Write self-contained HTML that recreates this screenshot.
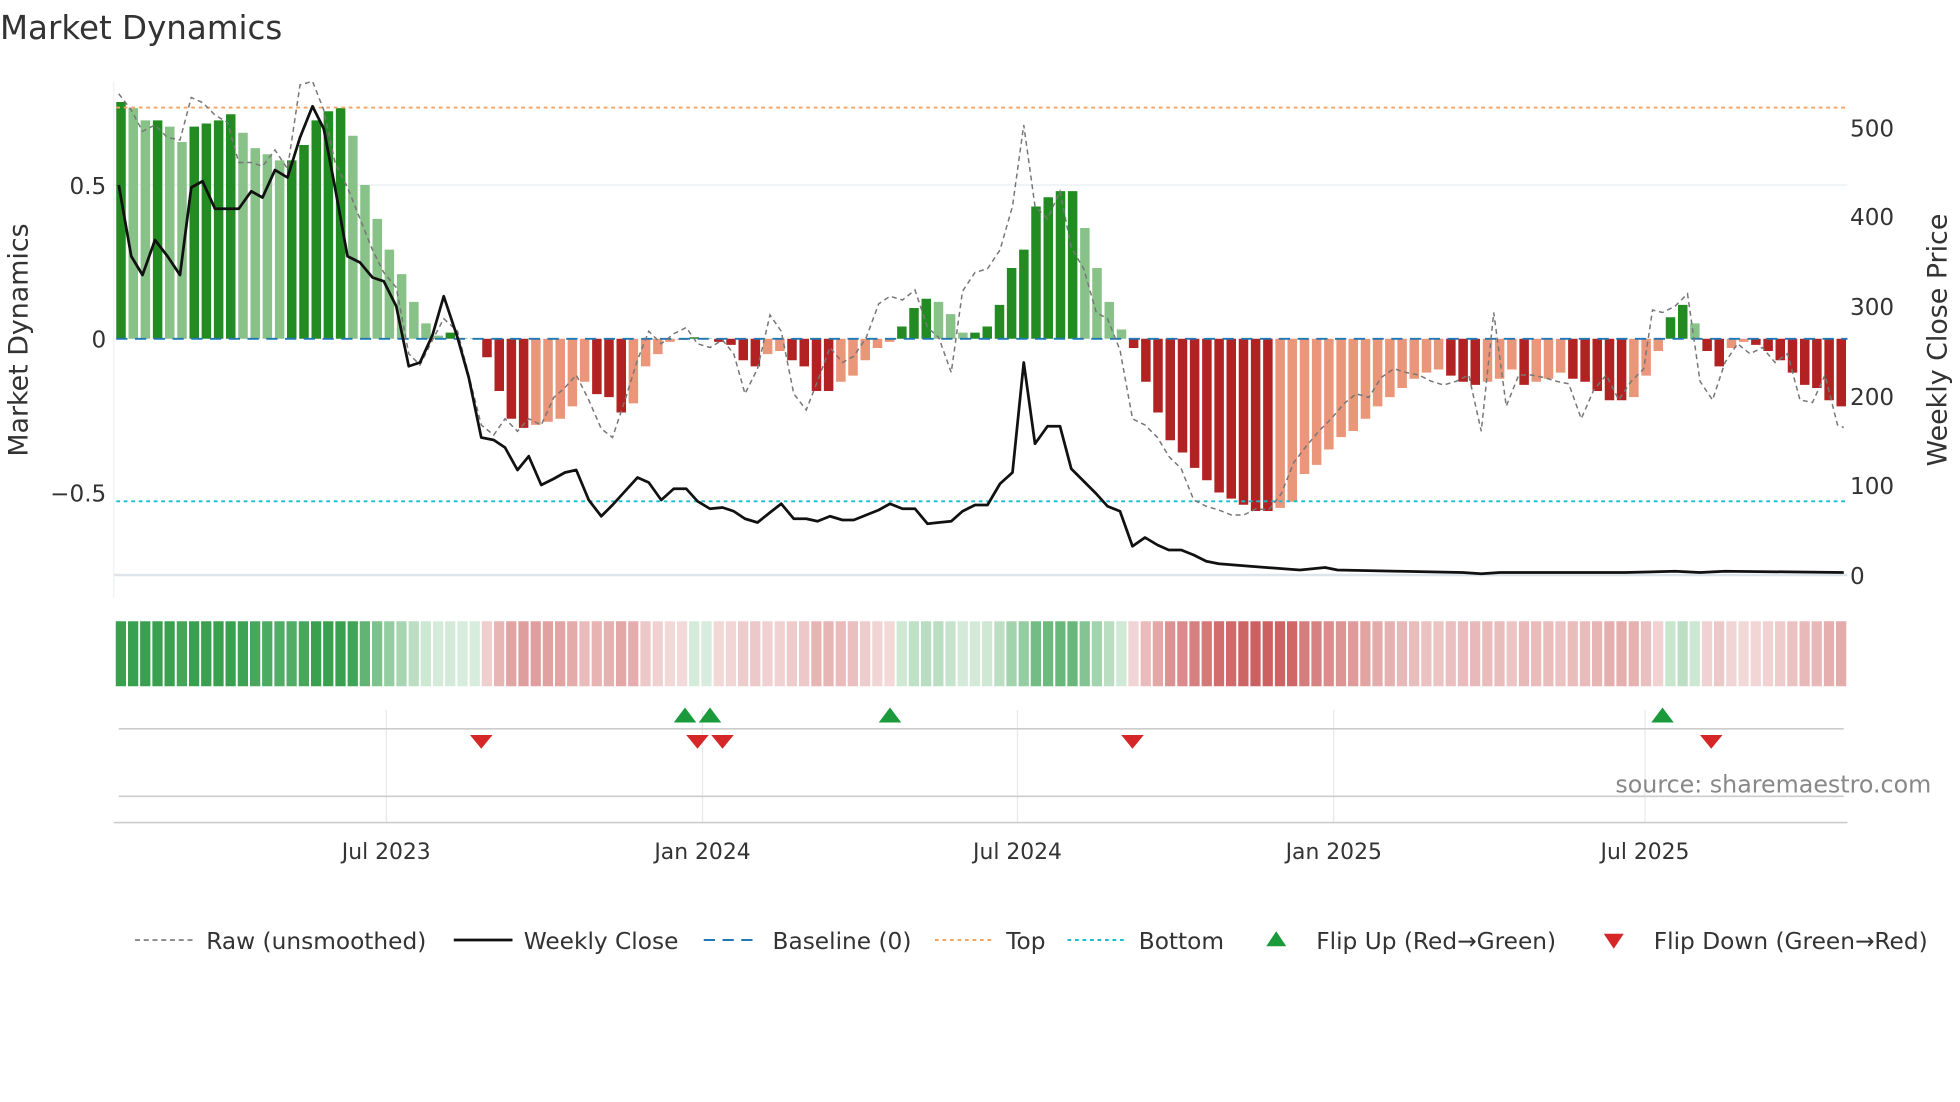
<!DOCTYPE html>
<html><head><meta charset="utf-8"><style>
html,body{margin:0;padding:0;background:#fff;}
svg{display:block;font-family:"DejaVu Sans","Liberation Sans",sans-serif;}
</style></head><body>
<svg id="s" width="1960" height="1102" viewBox="0 0 1568 881.6" xmlns="http://www.w3.org/2000/svg">
<rect width="1568" height="882" fill="#fff"/>
<text x="0" y="31" font-size="26" fill="#333">Market Dynamics</text>
<line x1="91" y1="148" x2="1478" y2="148" stroke="#e8eef2"/>
<line x1="91" y1="460" x2="1478" y2="460" stroke="#dde4ea" stroke-width="2"/>
<line x1="91" y1="65" x2="91" y2="478" stroke="#eef2f5"/>
<g id="bars"></g>
<line x1="93" y1="271" x2="1478" y2="271" stroke="#1f77b4" stroke-width="1.5" stroke-dasharray="9,6"/>
<line x1="93" y1="86" x2="1478" y2="86" stroke="#f4a460" stroke-width="1.5" stroke-dasharray="3,3"/>
<line x1="93" y1="401" x2="1478" y2="401" stroke="#17becf" stroke-width="1.5" stroke-dasharray="3,3"/>
<polyline id="raw" fill="none" stroke="#777" stroke-width="1.2" stroke-dasharray="4,3"/>
<polyline id="cls" fill="none" stroke="#111" stroke-width="2.2" stroke-linejoin="round"/>
<g font-size="18.5" fill="#333">
<text x="85" y="155" text-anchor="end">0.5</text>
<text x="85" y="278" text-anchor="end">0</text>
<text x="85" y="401" text-anchor="end">−0.5</text>
<text x="1480" y="109">500</text>
<text x="1480" y="180">400</text>
<text x="1480" y="252">300</text>
<text x="1480" y="324">200</text>
<text x="1480" y="395">100</text>
<text x="1480" y="467">0</text>
<text transform="translate(22,272) rotate(-90)" text-anchor="middle" font-size="21.5">Market Dynamics</text>
<text transform="translate(1557,272) rotate(-90)" text-anchor="middle" font-size="21.5">Weekly Close Price</text>
</g>
<g id="heat"></g>
<g stroke="#e6e9ec">
<line x1="309" y1="568" x2="309" y2="658"/><line x1="562" y1="568" x2="562" y2="658"/><line x1="814" y1="568" x2="814" y2="658"/><line x1="1067" y1="568" x2="1067" y2="658"/><line x1="1316" y1="568" x2="1316" y2="658"/>
</g>
<line x1="95" y1="583" x2="1475" y2="583" stroke="#ccc" stroke-width="1.3"/>
<line x1="95" y1="637" x2="1475" y2="637" stroke="#ccc" stroke-width="1.3"/>
<line x1="91" y1="658" x2="1478" y2="658" stroke="#ccc" stroke-width="1.3"/>
<g id="mk"></g>
<text x="1545" y="634" font-size="19" fill="#888" text-anchor="end">source: sharemaestro.com</text>
<g font-size="17.5" fill="#333" text-anchor="middle">
<text x="309" y="687">Jul 2023</text><text x="562" y="687">Jan 2024</text><text x="814" y="687">Jul 2024</text><text x="1067" y="687">Jan 2025</text><text x="1316" y="687">Jul 2025</text>
</g>
<g font-size="18.6" fill="#333">
<line x1="108" y1="752" x2="154" y2="752" stroke="#777" stroke-width="1.3" stroke-dasharray="4,3"/><text x="165" y="759">Raw (unsmoothed)</text>
<line x1="363" y1="752" x2="410" y2="752" stroke="#111" stroke-width="2.2"/><text x="419" y="759">Weekly Close</text>
<line x1="563" y1="752" x2="608" y2="752" stroke="#1f77b4" stroke-width="1.6" stroke-dasharray="9,6"/><text x="618" y="759">Baseline (0)</text>
<line x1="748" y1="752" x2="794" y2="752" stroke="#f4a460" stroke-width="1.6" stroke-dasharray="3,3"/><text x="805" y="759">Top</text>
<line x1="854" y1="752" x2="900" y2="752" stroke="#17becf" stroke-width="1.6" stroke-dasharray="3,3"/><text x="911" y="759">Bottom</text>
<polygon points="1013,757 1021,745 1029,757" fill="#1a9a3a"/><text x="1053" y="759">Flip Up (Red→Green)</text>
<polygon points="1283,747 1299,747 1291,759" fill="#d62728"/><text x="1323" y="759">Flip Down (Green→Red)</text>
</g>
</svg>
<script>
var v=[0.77,0.75,0.71,0.71,0.69,0.64,0.69,0.70,0.71,0.73,0.67,0.62,0.60,0.58,0.58,0.63,0.71,0.74,0.75,0.66,0.50,0.39,0.29,0.21,0.12,0.05,0.01,0.02,0.003,0.002,
-0.06,-0.17,-0.26,-0.29,-0.28,-0.27,-0.26,-0.22,-0.14,-0.18,-0.19,-0.24,-0.21,-0.09,-0.05,-0.01,-0.004,0.005,0.003,-0.01,
-0.02,-0.07,-0.09,-0.05,-0.04,-0.07,-0.09,-0.17,-0.17,-0.14,-0.12,-0.07,-0.03,-0.01,
0.04,0.1,0.13,0.12,0.08,0.02,0.02,0.04,0.11,0.23,0.29,0.43,0.46,0.48,0.48,0.36,0.23,0.12,0.03,
-0.03,-0.14,-0.24,-0.33,-0.37,-0.42,-0.46,-0.5,-0.52,-0.54,-0.56,-0.56,-0.55,-0.53,-0.44,-0.41,-0.36,-0.32,-0.3,-0.26,-0.22,-0.19,-0.16,-0.13,-0.11,-0.1,-0.12,-0.14,-0.15,-0.14,-0.13,-0.1,-0.15,-0.14,-0.13,-0.11,-0.13,-0.14,-0.17,-0.2,-0.2,-0.19,-0.12,-0.04,
0.07,0.11,0.05,
-0.04,-0.09,-0.03,-0.01,-0.02,-0.04,-0.07,-0.11,-0.15,-0.16,-0.2,-0.22];
var n=v.length,x0=92,w=(1478-92)/n,h='',hm='';
for(var i=0;i<n;i++){var x=x0+i*w,val=v[i],p=i?v[i-1]:0,c;
 if(val>=0)c=(val>=p)?'#228b22':'#88c288';else c=(val<=p)?'#b22222':'#e9967a';
 var y=271-val*246,hh=Math.abs(val*246);
 h+='<rect x="'+(x+1).toFixed(1)+'" y="'+Math.min(y,271).toFixed(1)+'" width="'+(w-2.2).toFixed(1)+'" height="'+hh.toFixed(1)+'" fill="'+c+'"/>';
 var a=Math.min(0.9,0.18+Math.abs(val)*1.05);
 hm+='<rect x="'+(x+0.6).toFixed(1)+'" y="497" width="'+(w-1.6).toFixed(1)+'" height="52" fill="'+(val>=0?'rgba(34,150,60,':'rgba(190,50,50,')+a.toFixed(2)+')"/>';}
document.getElementById('bars').innerHTML=h;document.getElementById('heat').innerHTML=hm;
var cl=[95,148,105,205,114,220,124,192,134,205,144,220,153,150,162,145,172,167,191,167,201,153,210,158,220,136,230,142,240,110,250,85,259,103,268,150,278,205,288,210,298,222,307,225,317,245,327,293,336,290,346,268,355,237,366,270,375,302,385,350,395,352,404,358,414,376,423,365,433,388,443,383,452,378,461,376,471,400,481,413,490,404,500,393,510,382,519,386,529,400,539,391,549,391,558,401,568,407,578,406,587,409,596,415,606,418,616,410,625,403,635,415,645,415,654,417,664,413,674,416,683,416,693,412,703,408,712,403,722,407,732,407,742,419,751,418,761,417,770,409,780,404,790,404,800,387,810,378,819,290,828,355,838,341,848,341,857,375,867,385,877,395,886,405,896,409,906,437,916,430,926,436,935,440,945,440,955,444,965,449,975,451,1000,453,1040,456,1060,454,1070,456,1120,457,1170,458,1185,459,1200,458,1300,458,1340,457,1360,458,1380,457,1475,458];
var rw=[95,75,105,88,114,105,124,100,134,110,144,112,153,78,162,82,172,92,182,98,191,130,201,130,210,133,220,120,230,135,240,68,250,65,259,88,268,130,278,150,288,175,298,200,307,218,317,230,327,283,336,292,346,272,355,255,366,265,375,300,385,340,395,348,404,335,414,345,423,335,433,340,443,318,452,310,461,300,471,320,481,343,490,350,500,320,510,288,519,265,529,275,539,267,549,262,558,275,568,278,578,272,587,283,596,315,606,295,616,252,625,265,635,315,645,328,654,305,664,278,674,290,683,285,693,270,703,243,712,237,722,240,732,232,742,262,751,270,761,298,770,233,780,218,790,215,800,200,810,165,819,100,828,165,838,175,848,153,857,198,867,215,877,250,886,255,896,280,906,335,916,340,926,350,935,365,945,375,955,400,965,405,975,408,985,412,995,412,1005,407,1015,408,1025,395,1035,370,1045,357,1055,345,1065,335,1075,323,1085,315,1095,318,1105,302,1115,295,1125,298,1135,300,1145,305,1155,308,1165,305,1175,300,1185,345,1195,250,1205,325,1215,300,1225,300,1235,302,1245,305,1255,307,1265,335,1275,312,1285,300,1295,320,1305,305,1315,295,1322,248,1330,250,1340,245,1350,235,1360,305,1370,320,1380,290,1390,275,1400,283,1410,278,1420,290,1430,283,1440,320,1450,322,1460,300,1470,340,1475,342];
function pts(a){var s='';for(var i=0;i<a.length;i+=2)s+=a[i]+','+a[i+1]+' ';return s;}
document.getElementById('cls').setAttribute('points',pts(cl));document.getElementById('raw').setAttribute('points',pts(rw));
var m='';[548,568,712,1330].forEach(function(x){m+='<polygon points="'+(x-9)+',578 '+x+',566 '+(x+9)+',578" fill="#1a9a3a"/>';});
[385,558,578,906,1369].forEach(function(x){m+='<polygon points="'+(x-9)+',588 '+(x+9)+',588 '+x+',599" fill="#d62728"/>';});
document.getElementById('mk').innerHTML=m;
</script>
</body></html>
